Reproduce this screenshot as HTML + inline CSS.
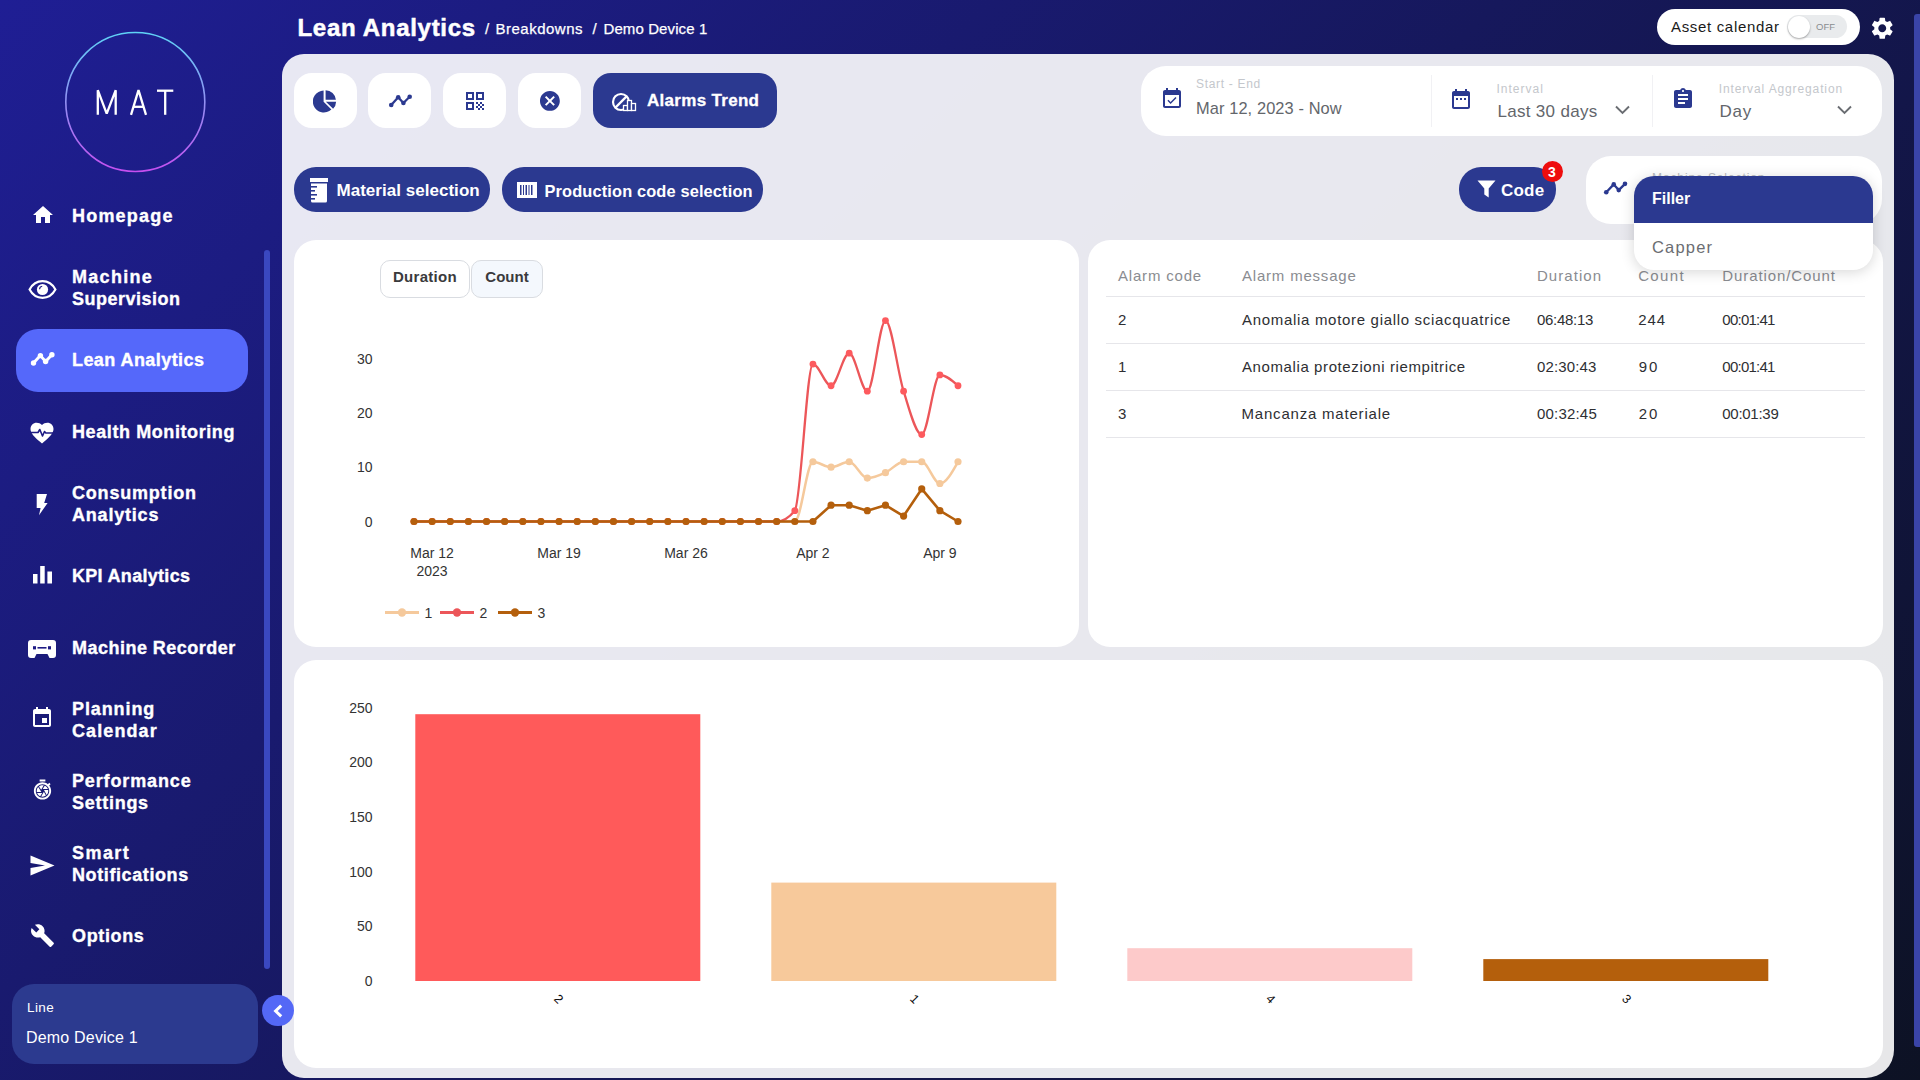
<!DOCTYPE html>
<html><head><meta charset="utf-8">
<style>
*{box-sizing:border-box;margin:0;padding:0}
html,body{width:1920px;height:1080px;overflow:hidden}
body{position:relative;font-family:"Liberation Sans",sans-serif;background:linear-gradient(135deg,#1f1e94 0%,#0d1224 100%);color:#fff}
.abs{position:absolute}
svg{display:block}
.nav{position:absolute;left:72px;font-weight:bold;font-size:18px;line-height:22px;color:#fff;letter-spacing:0.2px;-webkit-text-stroke:0.35px #fff}
.nicon{position:absolute;fill:#fff}
.panel{position:absolute;left:282px;top:54px;width:1612px;height:1024px;background:rgba(255,255,255,0.9);border-radius:22px 26px 28px 22px}
.card{position:absolute;background:#fff;border-radius:22px}
.wbtn{position:absolute;top:73px;width:63px;height:55px;background:#fff;border-radius:18px}
.dbtn{position:absolute;background:#2b3990;color:#fff;font-weight:bold}
</style></head>
<body>
<!-- logo -->
<svg class="abs" style="left:0;top:0" width="280" height="200">
  <defs><linearGradient id="lg" x1="0" y1="0" x2="0" y2="1"><stop offset="0" stop-color="#5fd3f6"/><stop offset="1" stop-color="#c64ff0"/></linearGradient></defs>
  <circle cx="135.3" cy="102" r="69.5" fill="none" stroke="url(#lg)" stroke-width="1.6"/>
  <g stroke="#fff" stroke-width="2.3" fill="none" stroke-linejoin="bevel">
    <polyline points="97.8,114.8 97.8,90.2 106.7,113.6 115.7,90.2 115.7,114.8"/>
    <polyline points="131,114.8 138.5,90.2 146,114.8"/>
    <line x1="133.5" y1="106.8" x2="143.5" y2="106.8"/>
    <line x1="157" y1="90.7" x2="173.3" y2="90.7"/>
    <line x1="165.2" y1="90.7" x2="165.2" y2="114.8"/>
  </g>
</svg>

<!-- sidebar scrollbar -->
<div class="abs" style="left:264px;top:250px;width:6px;height:719px;background:#3a48c0;border-radius:3px"></div>

<!-- active pill -->
<div class="abs" style="left:16px;top:329px;width:232px;height:63px;background:#5568fa;border-radius:22px"></div>


<!-- nav items -->
<div class="nav" style="top:205px;letter-spacing:1.2px">Homepage</div>
<div class="nav" style="top:266px;letter-spacing:1.3px">Machine</div>
<div class="nav" style="top:288px;letter-spacing:0.5px">Supervision</div>
<div class="nav" style="top:349px;letter-spacing:0.43px">Lean Analytics</div>
<div class="nav" style="top:421px;letter-spacing:0.59px">Health Monitoring</div>
<div class="nav" style="top:482px;letter-spacing:0.8px">Consumption</div>
<div class="nav" style="top:504px;letter-spacing:0.8px">Analytics</div>
<div class="nav" style="top:565px;letter-spacing:0.3px">KPI Analytics</div>
<div class="nav" style="top:637px;letter-spacing:0.48px">Machine Recorder</div>
<div class="nav" style="top:698px;letter-spacing:0.9px">Planning</div>
<div class="nav" style="top:720px;letter-spacing:1.1px">Calendar</div>
<div class="nav" style="top:770px;letter-spacing:0.86px">Performance</div>
<div class="nav" style="top:792px;letter-spacing:0.73px">Settings</div>
<div class="nav" style="top:842px;letter-spacing:1.45px">Smart</div>
<div class="nav" style="top:864px;letter-spacing:0.6px">Notifications</div>
<div class="nav" style="top:925px;letter-spacing:0.63px">Options</div>

<!-- nav icons -->
<svg class="nicon" style="left:30.5px;top:203px" width="24" height="24" viewBox="0 0 24 24"><path d="M10 20v-6h4v6h5v-8h3L12 3 2 12h3v8z"/></svg>
<svg class="abs" style="left:28px;top:280px" width="29" height="19" viewBox="0 0 29 19"><path d="M1.6 9.5C5 3.2 9.5 1.2 14.5 1.2S24 3.2 27.4 9.5C24 15.8 19.5 17.8 14.5 17.8S5 15.8 1.6 9.5Z" fill="none" stroke="#fff" stroke-width="2.2"/><circle cx="14.5" cy="9.5" r="5.6" fill="#fff"/><path d="M11.6 9.2a3 3 0 0 1 2.6-3" fill="none" stroke="#1e1b88" stroke-width="1.1"/></svg>
<svg class="abs" style="left:20px;top:340px" width="40" height="30"><g fill="#fff"><circle cx="13.5" cy="23" r="2.7"/><circle cx="20.4" cy="15.6" r="2.7"/><circle cx="25.6" cy="21.5" r="2.7"/><circle cx="31.9" cy="14.8" r="2.7"/></g><polyline points="13.5,23 20.4,15.6 25.6,21.5 31.9,14.8" fill="none" stroke="#fff" stroke-width="2.9" stroke-linejoin="round"/></svg>
<svg class="nicon" style="left:30px;top:422px" width="24" height="22" viewBox="0 0 24 22"><path d="M12 21.5L10.3 20C4.3 14.6 0.5 11.2 0.5 6.9 0.5 3.4 3.2 0.7 6.7 0.7c1.9 0 3.8.9 5.3 2.3C13.5 1.6 15.4.7 17.3.7c3.5 0 6.2 2.7 6.2 6.2 0 4.3-3.8 7.7-9.8 13.1z"/><polyline points="0.5,10.5 8,10.5 9.8,7.5 12.5,14 14.5,9.5 15.8,11 23.5,11" fill="none" stroke="#1e1b84" stroke-width="1.6" stroke-linejoin="round"/></svg>
<svg class="nicon" style="left:34px;top:493px" width="15" height="24" viewBox="0 0 15 24"><path d="M2.7 1H13L10.2 10H13.6L5 22.2 6.6 15H2.7z"/></svg>
<svg class="nicon" style="left:33px;top:566px" width="19" height="18" viewBox="0 0 19 18"><path d="M0 8h4.5v9.5H0zM7.2 0h4.5v17.5H7.2zM14.4 5.5H19v12h-4.6z"/></svg>
<svg class="nicon" style="left:28px;top:640px" width="28" height="18" viewBox="0 0 28 18"><path d="M3 0h22a3 3 0 0 1 3 3v12a3 3 0 0 1-3 3h-3.5l-2-4h-11l-2 4H3a3 3 0 0 1-3-3V3a3 3 0 0 1 3-3z"/><rect x="5" y="6.2" width="3" height="3.2" fill="#1e1b84"/><rect x="20" y="6.2" width="3" height="3.2" fill="#1e1b84"/><rect x="9.5" y="7" width="9" height="1.6" fill="#1e1b84"/></svg>
<svg class="nicon" style="left:30px;top:706px" width="24" height="24" viewBox="0 0 24 24"><path d="M17 12h-5v5h5v-5zM16 1v2H8V1H6v2H5c-1.11 0-1.99.9-1.99 2L3 19c0 1.1.89 2 2 2h14c1.1 0 2-.9 2-2V5c0-1.1-.9-2-2-2h-1V1h-2zm3 18H5V8h14v11z"/></svg>
<svg class="nicon" style="left:31px;top:778px" width="23" height="24" viewBox="0 0 24 24"><path d="M15 1H9v2h6V1zm4.03 6.39l1.42-1.42c-.43-.51-.9-.99-1.41-1.41l-1.42 1.42C16.07 4.74 14.12 4 12 4c-4.97 0-9 4.030-9 9s4.02 9 9 9 9-4.03 9-9c0-2.12-.74-4.07-1.97-5.61zM12 20c-3.87 0-7-3.13-7-7s3.13-7 7-7 7 3.13 7 7-3.13 7-7 7zm-.32-5H6.35c.57 1.62 1.82 2.92 3.41 3.56l-.11-.06 2.030-3.5zm5.97-4c-.57-1.6-1.78-2.89-3.34-3.54L12.26 11h5.39zm-7.04 7.83c.45.11.91.17 1.39.17 1.34 0 2.57-.45 3.570-1.19l-2.11-3.9-2.85 4.92zM7.55 8.99C6.59 10.05 6 11.46 6 13c0 .34.04.67.09 1h4.72L7.55 8.99zm8.79 8.14C17.37 16.06 18 14.6 18 13c0-.34-.04-.67-.09-1h-4.34l2.77 5.13zm-3.01-9.98C12.9 7.06 12.46 7 12 7c-1.4 0-2.69.49-3.71 1.29l2.32 3.56 2.72-4.7z"/></svg>
<svg class="nicon" style="left:30px;top:855px" width="25" height="21" viewBox="0 0 25 21"><path d="M0.5 0.5L24.5 10.5 0.5 20.5 0.5 13 15 10.5 0.5 8z"/></svg>
<svg class="nicon" style="left:30px;top:923px" width="25" height="25" viewBox="0 0 24 24"><path d="M22.7 19l-9.1-9.1c.9-2.3.4-5-1.5-6.9-2-2-5-2.4-7.4-1.3L9 6 6 9 1.6 4.7C.4 7.1.9 10.1 2.9 12.1c1.9 1.9 4.6 2.4 6.9 1.5l9.1 9.1c.4.4 1 .4 1.4 0l2.3-2.3c.5-.4.5-1.1.1-1.4z"/></svg>

<!-- line box -->
<div class="abs" style="left:12px;top:984px;width:246px;height:80px;background:#2c3a8f;border-radius:22px"></div>
<div class="abs" style="left:27px;top:1000px;font-size:13.5px;line-height:16px;letter-spacing:0.37px">Line</div>
<div class="abs" style="left:26px;top:1028px;font-size:16px;line-height:19px;letter-spacing:0.19px">Demo Device 1</div>
<!-- header -->
<div class="abs" style="left:297.5px;top:13px;font-size:24px;line-height:30px;font-weight:bold;letter-spacing:0.7px;-webkit-text-stroke:0.5px #fff">Lean Analytics</div>
<div class="abs" style="left:485px;top:19.5px;font-size:15px;line-height:18px;-webkit-text-stroke:0.25px #fff">/</div><div class="abs" style="left:495.5px;top:19.5px;font-size:15px;line-height:18px;letter-spacing:0.5px;-webkit-text-stroke:0.25px #fff">Breakdowns</div>
<div class="abs" style="left:592.5px;top:19.5px;font-size:15px;line-height:18px;-webkit-text-stroke:0.25px #fff">/</div><div class="abs" style="left:603.5px;top:19.5px;font-size:15px;line-height:18px;letter-spacing:0.1px;-webkit-text-stroke:0.25px #fff">Demo Device 1</div>


<!-- asset calendar -->
<div class="abs" style="left:1657px;top:9px;width:203px;height:36px;background:#fff;border-radius:18px"></div>
<div class="abs" style="left:1671px;top:18px;font-size:15px;line-height:18px;color:#1a1a1a;letter-spacing:0.67px">Asset calendar</div>
<div class="abs" style="left:1787px;top:15px;width:60px;height:23px;background:#e9ebed;border-radius:12px"></div>
<div class="abs" style="left:1816px;top:21px;font-size:9.5px;line-height:11px;color:#8a8d90">OFF</div>
<div class="abs" style="left:1787.5px;top:15.5px;width:22.5px;height:22.5px;background:#fff;border-radius:50%;box-shadow:0 1px 2px rgba(0,0,0,0.35)"></div>
<svg class="abs" style="left:1869.3px;top:15.3px" width="26.5" height="26.5" viewBox="0 0 24 24"><path fill="#fff" d="M19.14 12.94c.04-.3.06-.61.06-.94 0-.32-.02-.64-.07-.94l2.03-1.58c.18-.14.23-.41.12-.61l-1.92-3.32c-.12-.22-.37-.29-.59-.22l-2.39.96c-.5-.38-1.03-.7-1.62-.94l-.36-2.54c-.04-.24-.24-.41-.48-.41h-3.84c-.24 0-.43.17-.47.41l-.36 2.54c-.59.24-1.13.57-1.62.94l-2.39-.96c-.22-.08-.47 0-.59.22L2.740 8.87c-.12.21-.08.47.12.61l2.03 1.58c-.05.3-.09.63-.09.94s.02.64.07.94l-2.03 1.58c-.18.14-.23.41-.12.61l1.92 3.32c.12.22.37.29.59.22l2.39-.96c.5.38 1.03.7 1.62.94l.36 2.54c.05.24.24.41.48.41h3.84c.24 0 .44-.17.47-.41l.36-2.54c.59-.24 1.13-.56 1.62-.94l2.39.96c.22.08.47 0 .59-.22l1.92-3.32c.12-.22.07-.47-.12-.61l-2.01-1.58zM12 15.6c-1.98 0-3.6-1.62-3.6-3.6s1.62-3.6 3.6-3.6 3.6 1.62 3.6 3.6-1.62 3.6-3.6 3.6z"/></svg>

<!-- right scrollbar -->
<div class="abs" style="left:1914px;top:14px;width:6px;height:1033px;background:#3a44a8;border-radius:3px 0 0 3px"></div>

<!-- main panel -->
<div class="panel"></div>


<!-- toolbar white buttons -->
<div class="wbtn" style="left:294px"></div>
<div class="wbtn" style="left:368px"></div>
<div class="wbtn" style="left:443px"></div>
<div class="wbtn" style="left:518px"></div>
<svg class="abs" style="left:313px;top:89px" width="24" height="24" viewBox="0 0 24 24"><path fill="#2b3990" d="M10.6 1.5v11.2l7.8 7.8A11 11 0 1 1 10.6 1.5zM12.6 1.2A10.5 10.5 0 0 1 22.9 10.7H12.6zM12.9 12.7h10.2a10.5 10.5 0 0 1-3 7.1z"/></svg>
<svg class="abs" style="left:380px;top:85px" width="40" height="30"><g fill="#2b3990"><circle cx="11.25" cy="20" r="2.3"/><circle cx="18.2" cy="12.3" r="2.3"/><circle cx="23.4" cy="18" r="2.3"/><circle cx="29.7" cy="11.7" r="2.3"/></g><polyline points="11.25,20 18.2,12.3 23.4,18 29.7,11.7" fill="none" stroke="#2b3990" stroke-width="2.3" stroke-linejoin="round"/></svg>
<svg class="abs" style="left:463px;top:89px" width="24" height="24" viewBox="0 0 24 24"><path fill="#2b3990" d="M3 11h8V3H3v8zm2-6h4v4H5V5zM3 21h8v-8H3v8zm2-6h4v4H5v-4zM13 3v8h8V3h-8zm6 6h-4V5h4v4zM19 19h2v2h-2zM13 13h2v2h-2zM15 15h2v2h-2zM13 17h2v2h-2zM15 19h2v2h-2zM17 17h2v2h-2zM17 13h2v2h-2zM19 15h2v2h-2z"/></svg>
<svg class="abs" style="left:538px;top:89px" width="23.8" height="23.8" viewBox="0 0 24 24"><path fill="#2b3990" d="M12 2C6.47 2 2 6.47 2 12s4.47 10 10 10 10-4.47 10-10S17.53 2 12 2zm5 13.59L15.590 17 12 13.41 8.41 17 7 15.59 10.59 12 7 8.41 8.41 7 12 10.59 15.59 7 17 8.41 13.41 12 17 15.59z"/></svg>
<div class="dbtn" style="left:593px;top:73px;width:184px;height:55px;border-radius:18px"></div>
<svg class="abs" style="left:611px;top:90px" width="28" height="24"><circle cx="10" cy="12" r="8" fill="none" stroke="#fff" stroke-width="2.2"/><line x1="4.4" y1="17.6" x2="15.6" y2="6.4" stroke="#fff" stroke-width="2.2"/><g fill="#2b3990" stroke="#fff" stroke-width="1.3"><rect x="12.5" y="15.5" width="4" height="5"/><rect x="16.5" y="10.5" width="4" height="10"/><rect x="20.5" y="13.5" width="4" height="7"/></g></svg>
<div class="abs" style="left:647px;top:90.8px;font-size:17px;line-height:20px;font-weight:bold;letter-spacing:0.3px;-webkit-text-stroke:0.3px #fff">Alarms Trend</div>

<!-- date panel -->
<div class="abs" style="left:1141px;top:66px;width:741px;height:70px;background:#fff;border-radius:25px"></div>
<div class="abs" style="left:1431px;top:75px;width:1px;height:52px;background:#f1f1f4"></div>
<div class="abs" style="left:1652px;top:75px;width:1px;height:52px;background:#f1f1f4"></div>
<svg class="abs" style="left:1160px;top:87px" width="24" height="24" viewBox="0 0 24 24"><path fill="#2b3990" d="M16.53 11.06L15.47 10l-4.88 4.88-2.12-2.12-1.06 1.06L10.59 17l5.94-5.94zM19 3h-1V1h-2v2H8V1H6v2H5c-1.11 0-1.99.9-1.99 2L3 19c0 1.1.89 2 2 2h14c1.1 0 2-.9 2-2V5c0-1.1-.9-2-2-2zm0 16H5V8h14v11z"/></svg>
<div class="abs" style="left:1196px;top:77px;font-size:12px;line-height:14px;color:#c4c7cc;letter-spacing:0.68px">Start - End</div>
<div class="abs" style="left:1196px;top:99px;font-size:16.4px;line-height:19px;color:#63666b;letter-spacing:0.1px">Mar 12, 2023 - Now</div>
<svg class="abs" style="left:1449px;top:87px" width="24" height="24" viewBox="0 0 24 24"><path fill="#2b3990" d="M9 11H7v2h2v-2zm4 0h-2v2h2v-2zm4 0h-2v2h2v-2zm2-7h-1V2h-2v2H8V2H6v2H5c-1.11 0-1.99.9-1.99 2L3 20c0 1.1.89 2 2 2h14c1.1 0 2-.9 2-2V6c0-1.1-.9-2-2-2zm0 16H5V9h14v11z"/></svg>
<div class="abs" style="left:1496.5px;top:82px;font-size:12px;line-height:14px;color:#c4c7cc;letter-spacing:1px">Interval</div>
<div class="abs" style="left:1497.5px;top:102px;font-size:17px;line-height:20px;color:#63666b;letter-spacing:0.3px">Last 30 days</div>
<svg class="abs" style="left:1614px;top:103px" width="17" height="13" viewBox="0 0 17 13"><polyline points="2,3.5 8.5,10 15,3.5" fill="none" stroke="#6a6d72" stroke-width="1.9"/></svg>
<svg class="abs" style="left:1671px;top:87px" width="24" height="24" viewBox="0 0 24 24"><path fill="#2b3990" d="M19 3h-4.18C14.4 1.84 13.3 1 12 1c-1.3 0-2.4.84-2.82 2H5c-1.1 0-2 .9-2 2v14c0 1.1.9 2 2 2h14c1.1 0 2-.9 2-2V5c0-1.1-.9-2-2-2zm-7 0c.55 0 1 .45 1 1s-.45 1-1 1-1-.45-1-1 .45-1 1-1zm2 14H7v-2h7v2zm3-4H7v-2h10v2zm0-4H7V7h10v2z"/></svg>
<div class="abs" style="left:1718.7px;top:82px;font-size:12px;line-height:14px;color:#c4c7cc;letter-spacing:0.88px">Interval Aggregation</div>
<div class="abs" style="left:1719.5px;top:102px;font-size:17px;line-height:20px;color:#63666b;letter-spacing:0.75px">Day</div>
<svg class="abs" style="left:1836px;top:103px" width="17" height="13" viewBox="0 0 17 13"><polyline points="2,3.5 8.5,10 15,3.5" fill="none" stroke="#6a6d72" stroke-width="1.9"/></svg>

<!-- selection buttons -->
<div class="dbtn" style="left:294px;top:167px;width:196px;height:45px;border-radius:22px"></div>
<svg class="abs" style="left:309px;top:177px" width="20" height="26" viewBox="0 0 20 26"><path fill="#fff" d="M1 1h18v4H1zM2 6.5h16v17.5a1.5 1.5 0 0 1-1.5 1.5h-13A1.5 1.5 0 0 1 2 24z"/><g fill="#2b3990"><rect x="2" y="9" width="6" height="1.6"/><rect x="2" y="13" width="4" height="1.6"/><rect x="2" y="17" width="6" height="1.6"/><rect x="2" y="21" width="4" height="1.6"/></g></svg>
<div class="abs" style="left:336.5px;top:181px;font-size:17px;line-height:20px;font-weight:bold;letter-spacing:0.03px">Material selection</div>
<div class="dbtn" style="left:502px;top:167px;width:261px;height:45px;border-radius:22px"></div>
<svg class="abs" style="left:517px;top:182px" width="20" height="16" viewBox="0 0 20 16"><path fill="#fff" d="M0 0h20v16H0z"/><g fill="#2b3990"><rect x="3" y="3" width="1.5" height="10"/><rect x="6" y="3" width="1" height="10"/><rect x="8.5" y="3" width="1.5" height="10"/><rect x="11.5" y="3" width="1" height="10"/><rect x="14" y="3" width="1.5" height="10"/></g></svg>
<div class="abs" style="left:544.5px;top:180.5px;font-size:16.4px;line-height:20px;font-weight:bold;letter-spacing:0.13px">Production code selection</div>

<!-- code filter -->
<div class="dbtn" style="left:1459px;top:167px;width:97px;height:45px;border-radius:22px"></div>
<svg class="abs" style="left:1477px;top:180px" width="19" height="18" viewBox="0 0 19 18"><path fill="#fff" d="M0.5 0.5h18l-6.8 8v9l-4.4-3v-6z"/></svg>
<div class="abs" style="left:1501px;top:180.5px;font-size:17px;line-height:20px;font-weight:bold;letter-spacing:0.2px">Code</div>
<div class="abs" style="left:1541.5px;top:161px;width:21px;height:21px;border-radius:50%;background:#ee0d0d"></div>
<div class="abs" style="left:1541.5px;top:163.5px;width:21px;text-align:center;font-size:14px;line-height:16px;font-weight:bold">3</div>

<!-- machine selection -->
<div class="abs" style="left:1586px;top:156px;width:296px;height:68px;background:#fff;border-radius:25px"></div>
<div class="abs" style="left:1652px;top:171px;font-size:12px;line-height:14px;color:#b9bbc0;letter-spacing:0.9px">Machine Selection</div>
<svg class="abs" style="left:1596px;top:173px" width="40" height="30"><g fill="#2b3990"><circle cx="10.25" cy="19.2" r="2.3"/><circle cx="17.75" cy="11.4" r="2.3"/><circle cx="22.75" cy="17.1" r="2.3"/><circle cx="29" cy="10.85" r="2.3"/></g><polyline points="10.25,19.2 17.75,11.4 22.75,17.1 29,10.85" fill="none" stroke="#2b3990" stroke-width="2.3" stroke-linejoin="round"/></svg>

<!-- cards -->
<div class="card" style="left:294px;top:240px;width:785px;height:407px"></div>
<div class="card" style="left:1088px;top:240px;width:795px;height:407px"></div>
<div class="card" style="left:294px;top:660px;width:1589px;height:408px"></div>
<!--CHARTS-->
<div class="abs" style="left:380px;top:260px;width:90px;height:38px;border:1px solid #d9dce1;border-radius:10px;background:#fff"></div>
<div class="abs" style="left:471px;top:260px;width:72px;height:38px;border:1px solid #d9dce1;border-radius:10px;background:#f4f8fd"></div>
<div class="abs" style="left:380px;top:268.2px;width:90px;text-align:center;font-size:15px;line-height:18px;font-weight:bold;color:#3a3a3c;letter-spacing:0.29px">Duration</div>
<div class="abs" style="left:471px;top:268.2px;width:72px;text-align:center;font-size:15px;line-height:18px;font-weight:bold;color:#3a3a3c">Count</div>
<svg class="abs" style="left:0;top:0" width="1100" height="660">
<text x="372.5" y="526.5" text-anchor="end" font-size="14" fill="#333">0</text>
<text x="372.5" y="472.2" text-anchor="end" font-size="14" fill="#333">10</text>
<text x="372.5" y="417.9" text-anchor="end" font-size="14" fill="#333">20</text>
<text x="372.5" y="363.6" text-anchor="end" font-size="14" fill="#333">30</text>
<text x="432.1" y="558" text-anchor="middle" font-size="14" fill="#333">Mar 12</text>
<text x="559.1" y="558" text-anchor="middle" font-size="14" fill="#333">Mar 19</text>
<text x="686.0" y="558" text-anchor="middle" font-size="14" fill="#333">Mar 26</text>
<text x="812.9" y="558" text-anchor="middle" font-size="14" fill="#333">Apr 2</text>
<text x="939.9" y="558" text-anchor="middle" font-size="14" fill="#333">Apr 9</text>
<text x="432.1" y="576" text-anchor="middle" font-size="14" fill="#333">2023</text>
<path d="M414.00,521.50C420.04,521.50 426.09,521.50 432.13,521.50C438.18,521.50 444.22,521.50 450.27,521.50C456.31,521.50 462.36,521.50 468.40,521.50C474.44,521.50 480.49,521.50 486.53,521.50C492.58,521.50 498.62,521.50 504.67,521.50C510.71,521.50 516.76,521.50 522.80,521.50C528.84,521.50 534.89,521.50 540.93,521.50C546.98,521.50 553.02,521.50 559.07,521.50C565.11,521.50 571.16,521.50 577.20,521.50C583.24,521.50 589.29,521.50 595.33,521.50C601.38,521.50 607.42,521.50 613.47,521.50C619.51,521.50 625.56,521.50 631.60,521.50C637.64,521.50 643.69,521.50 649.73,521.50C655.78,521.50 661.82,521.50 667.87,521.50C673.91,521.50 679.96,521.50 686.00,521.50C692.04,521.50 698.09,521.50 704.13,521.50C710.18,521.50 716.22,521.50 722.27,521.50C728.31,521.50 734.36,521.50 740.40,521.50C746.44,521.50 752.49,521.50 758.53,521.50C764.58,521.50 770.62,521.50 776.67,521.50C782.71,521.50 788.76,521.50 794.80,521.50C800.84,521.50 806.89,461.77 812.93,461.77C818.98,461.77 825.02,467.20 831.07,467.20C837.11,467.20 843.16,461.77 849.20,461.77C855.24,461.77 861.29,478.06 867.33,478.06C873.38,478.06 879.42,475.35 885.47,472.63C891.51,469.92 897.56,461.77 903.60,461.77C909.64,461.77 915.69,461.77 921.73,461.77C927.78,461.77 933.82,483.49 939.87,483.49C945.91,483.49 951.96,472.63 958.00,461.77" fill="none" stroke="#f5c99c" stroke-width="2.5" stroke-linejoin="round"/>
<circle cx="414.00" cy="521.50" r="3.6" fill="#f5c99c"/>
<circle cx="432.13" cy="521.50" r="3.6" fill="#f5c99c"/>
<circle cx="450.27" cy="521.50" r="3.6" fill="#f5c99c"/>
<circle cx="468.40" cy="521.50" r="3.6" fill="#f5c99c"/>
<circle cx="486.53" cy="521.50" r="3.6" fill="#f5c99c"/>
<circle cx="504.67" cy="521.50" r="3.6" fill="#f5c99c"/>
<circle cx="522.80" cy="521.50" r="3.6" fill="#f5c99c"/>
<circle cx="540.93" cy="521.50" r="3.6" fill="#f5c99c"/>
<circle cx="559.07" cy="521.50" r="3.6" fill="#f5c99c"/>
<circle cx="577.20" cy="521.50" r="3.6" fill="#f5c99c"/>
<circle cx="595.33" cy="521.50" r="3.6" fill="#f5c99c"/>
<circle cx="613.47" cy="521.50" r="3.6" fill="#f5c99c"/>
<circle cx="631.60" cy="521.50" r="3.6" fill="#f5c99c"/>
<circle cx="649.73" cy="521.50" r="3.6" fill="#f5c99c"/>
<circle cx="667.87" cy="521.50" r="3.6" fill="#f5c99c"/>
<circle cx="686.00" cy="521.50" r="3.6" fill="#f5c99c"/>
<circle cx="704.13" cy="521.50" r="3.6" fill="#f5c99c"/>
<circle cx="722.27" cy="521.50" r="3.6" fill="#f5c99c"/>
<circle cx="740.40" cy="521.50" r="3.6" fill="#f5c99c"/>
<circle cx="758.53" cy="521.50" r="3.6" fill="#f5c99c"/>
<circle cx="776.67" cy="521.50" r="3.6" fill="#f5c99c"/>
<circle cx="794.80" cy="521.50" r="3.6" fill="#f5c99c"/>
<circle cx="812.93" cy="461.77" r="3.6" fill="#f5c99c"/>
<circle cx="831.07" cy="467.20" r="3.6" fill="#f5c99c"/>
<circle cx="849.20" cy="461.77" r="3.6" fill="#f5c99c"/>
<circle cx="867.33" cy="478.06" r="3.6" fill="#f5c99c"/>
<circle cx="885.47" cy="472.63" r="3.6" fill="#f5c99c"/>
<circle cx="903.60" cy="461.77" r="3.6" fill="#f5c99c"/>
<circle cx="921.73" cy="461.77" r="3.6" fill="#f5c99c"/>
<circle cx="939.87" cy="483.49" r="3.6" fill="#f5c99c"/>
<circle cx="958.00" cy="461.77" r="3.6" fill="#f5c99c"/>
<path d="M414.00,521.50C420.04,521.50 426.09,521.50 432.13,521.50C438.18,521.50 444.22,521.50 450.27,521.50C456.31,521.50 462.36,521.50 468.40,521.50C474.44,521.50 480.49,521.50 486.53,521.50C492.58,521.50 498.62,521.50 504.67,521.50C510.71,521.50 516.76,521.50 522.80,521.50C528.84,521.50 534.89,521.50 540.93,521.50C546.98,521.50 553.02,521.50 559.07,521.50C565.11,521.50 571.16,521.50 577.20,521.50C583.24,521.50 589.29,521.50 595.33,521.50C601.38,521.50 607.42,521.50 613.47,521.50C619.51,521.50 625.56,521.50 631.60,521.50C637.64,521.50 643.69,521.50 649.73,521.50C655.78,521.50 661.82,521.50 667.87,521.50C673.91,521.50 679.96,521.50 686.00,521.50C692.04,521.50 698.09,521.50 704.13,521.50C710.18,521.50 716.22,521.50 722.27,521.50C728.31,521.50 734.36,521.50 740.40,521.50C746.44,521.50 752.49,521.50 758.53,521.50C764.58,521.50 770.62,521.50 776.67,521.50C782.71,521.50 788.76,517.88 794.80,510.64C800.84,503.40 806.89,364.03 812.93,364.03C818.98,364.03 825.02,385.75 831.07,385.75C837.11,385.75 843.16,353.17 849.20,353.17C855.24,353.17 861.29,391.18 867.33,391.18C873.38,391.18 879.42,320.59 885.47,320.59C891.51,320.59 897.56,372.18 903.60,391.18C909.64,410.19 915.69,434.62 921.73,434.62C927.78,434.62 933.82,374.89 939.87,374.89C945.91,374.89 951.96,380.32 958.00,385.75" fill="none" stroke="#ec5659" stroke-width="2.3" stroke-linejoin="round"/>
<circle cx="414.00" cy="521.50" r="3.4" fill="#fd5a5e"/>
<circle cx="432.13" cy="521.50" r="3.4" fill="#fd5a5e"/>
<circle cx="450.27" cy="521.50" r="3.4" fill="#fd5a5e"/>
<circle cx="468.40" cy="521.50" r="3.4" fill="#fd5a5e"/>
<circle cx="486.53" cy="521.50" r="3.4" fill="#fd5a5e"/>
<circle cx="504.67" cy="521.50" r="3.4" fill="#fd5a5e"/>
<circle cx="522.80" cy="521.50" r="3.4" fill="#fd5a5e"/>
<circle cx="540.93" cy="521.50" r="3.4" fill="#fd5a5e"/>
<circle cx="559.07" cy="521.50" r="3.4" fill="#fd5a5e"/>
<circle cx="577.20" cy="521.50" r="3.4" fill="#fd5a5e"/>
<circle cx="595.33" cy="521.50" r="3.4" fill="#fd5a5e"/>
<circle cx="613.47" cy="521.50" r="3.4" fill="#fd5a5e"/>
<circle cx="631.60" cy="521.50" r="3.4" fill="#fd5a5e"/>
<circle cx="649.73" cy="521.50" r="3.4" fill="#fd5a5e"/>
<circle cx="667.87" cy="521.50" r="3.4" fill="#fd5a5e"/>
<circle cx="686.00" cy="521.50" r="3.4" fill="#fd5a5e"/>
<circle cx="704.13" cy="521.50" r="3.4" fill="#fd5a5e"/>
<circle cx="722.27" cy="521.50" r="3.4" fill="#fd5a5e"/>
<circle cx="740.40" cy="521.50" r="3.4" fill="#fd5a5e"/>
<circle cx="758.53" cy="521.50" r="3.4" fill="#fd5a5e"/>
<circle cx="776.67" cy="521.50" r="3.4" fill="#fd5a5e"/>
<circle cx="794.80" cy="510.64" r="3.4" fill="#fd5a5e"/>
<circle cx="812.93" cy="364.03" r="3.4" fill="#fd5a5e"/>
<circle cx="831.07" cy="385.75" r="3.4" fill="#fd5a5e"/>
<circle cx="849.20" cy="353.17" r="3.4" fill="#fd5a5e"/>
<circle cx="867.33" cy="391.18" r="3.4" fill="#fd5a5e"/>
<circle cx="885.47" cy="320.59" r="3.4" fill="#fd5a5e"/>
<circle cx="903.60" cy="391.18" r="3.4" fill="#fd5a5e"/>
<circle cx="921.73" cy="434.62" r="3.4" fill="#fd5a5e"/>
<circle cx="939.87" cy="374.89" r="3.4" fill="#fd5a5e"/>
<circle cx="958.00" cy="385.75" r="3.4" fill="#fd5a5e"/>
<path d="M414.00,521.50 L432.13,521.50 L450.27,521.50 L468.40,521.50 L486.53,521.50 L504.67,521.50 L522.80,521.50 L540.93,521.50 L559.07,521.50 L577.20,521.50 L595.33,521.50 L613.47,521.50 L631.60,521.50 L649.73,521.50 L667.87,521.50 L686.00,521.50 L704.13,521.50 L722.27,521.50 L740.40,521.50 L758.53,521.50 L776.67,521.50 L794.80,521.50 L812.93,521.50 L831.07,505.21 L849.20,505.21 L867.33,510.64 L885.47,505.21 L903.60,516.07 L921.73,488.92 L939.87,510.64 L958.00,521.50" fill="none" stroke="#b45f0c" stroke-width="2.6" stroke-linejoin="round"/>
<circle cx="414.00" cy="521.50" r="3.6" fill="#b45f0c"/>
<circle cx="432.13" cy="521.50" r="3.6" fill="#b45f0c"/>
<circle cx="450.27" cy="521.50" r="3.6" fill="#b45f0c"/>
<circle cx="468.40" cy="521.50" r="3.6" fill="#b45f0c"/>
<circle cx="486.53" cy="521.50" r="3.6" fill="#b45f0c"/>
<circle cx="504.67" cy="521.50" r="3.6" fill="#b45f0c"/>
<circle cx="522.80" cy="521.50" r="3.6" fill="#b45f0c"/>
<circle cx="540.93" cy="521.50" r="3.6" fill="#b45f0c"/>
<circle cx="559.07" cy="521.50" r="3.6" fill="#b45f0c"/>
<circle cx="577.20" cy="521.50" r="3.6" fill="#b45f0c"/>
<circle cx="595.33" cy="521.50" r="3.6" fill="#b45f0c"/>
<circle cx="613.47" cy="521.50" r="3.6" fill="#b45f0c"/>
<circle cx="631.60" cy="521.50" r="3.6" fill="#b45f0c"/>
<circle cx="649.73" cy="521.50" r="3.6" fill="#b45f0c"/>
<circle cx="667.87" cy="521.50" r="3.6" fill="#b45f0c"/>
<circle cx="686.00" cy="521.50" r="3.6" fill="#b45f0c"/>
<circle cx="704.13" cy="521.50" r="3.6" fill="#b45f0c"/>
<circle cx="722.27" cy="521.50" r="3.6" fill="#b45f0c"/>
<circle cx="740.40" cy="521.50" r="3.6" fill="#b45f0c"/>
<circle cx="758.53" cy="521.50" r="3.6" fill="#b45f0c"/>
<circle cx="776.67" cy="521.50" r="3.6" fill="#b45f0c"/>
<circle cx="794.80" cy="521.50" r="3.6" fill="#b45f0c"/>
<circle cx="812.93" cy="521.50" r="3.6" fill="#b45f0c"/>
<circle cx="831.07" cy="505.21" r="3.6" fill="#b45f0c"/>
<circle cx="849.20" cy="505.21" r="3.6" fill="#b45f0c"/>
<circle cx="867.33" cy="510.64" r="3.6" fill="#b45f0c"/>
<circle cx="885.47" cy="505.21" r="3.6" fill="#b45f0c"/>
<circle cx="903.60" cy="516.07" r="3.6" fill="#b45f0c"/>
<circle cx="921.73" cy="488.92" r="3.6" fill="#b45f0c"/>
<circle cx="939.87" cy="510.64" r="3.6" fill="#b45f0c"/>
<circle cx="958.00" cy="521.50" r="3.6" fill="#b45f0c"/>
<line x1="385" y1="612.5" x2="419" y2="612.5" stroke="#f5c99c" stroke-width="3"/>
<circle cx="402" cy="612.5" r="4.2" fill="#f5c99c"/>
<text x="424.5" y="617.5" font-size="14" fill="#333">1</text>
<line x1="440" y1="612.5" x2="474" y2="612.5" stroke="#ec5659" stroke-width="3"/>
<circle cx="457" cy="612.5" r="4.2" fill="#ec5659"/>
<text x="479.5" y="617.5" font-size="14" fill="#333">2</text>
<line x1="498" y1="612.5" x2="532" y2="612.5" stroke="#b45f0c" stroke-width="3"/>
<circle cx="515" cy="612.5" r="4.2" fill="#b45f0c"/>
<text x="537.5" y="617.5" font-size="14" fill="#333">3</text>
</svg><svg class="abs" style="left:0;top:0" width="1900" height="1080">
<text x="372.5" y="986.0" text-anchor="end" font-size="14" fill="#333">0</text>
<text x="372.5" y="931.3" text-anchor="end" font-size="14" fill="#333">50</text>
<text x="372.5" y="876.6" text-anchor="end" font-size="14" fill="#333">100</text>
<text x="372.5" y="822.0" text-anchor="end" font-size="14" fill="#333">150</text>
<text x="372.5" y="767.3" text-anchor="end" font-size="14" fill="#333">200</text>
<text x="372.5" y="712.6" text-anchor="end" font-size="14" fill="#333">250</text>
<rect x="415.3" y="714.2" width="285" height="266.8" fill="#ff5a5a"/>
<text x="0" y="4.3" font-size="12.5" fill="#111" text-anchor="middle" transform="translate(558.8,999) rotate(45)">2</text>
<rect x="771.3" y="882.6" width="285" height="98.4" fill="#f7c99b"/>
<text x="0" y="4.3" font-size="12.5" fill="#111" text-anchor="middle" transform="translate(914.8,999) rotate(45)">1</text>
<rect x="1127.3" y="948.2" width="285" height="32.8" fill="#fdcaca"/>
<text x="0" y="4.3" font-size="12.5" fill="#111" text-anchor="middle" transform="translate(1270.8,999) rotate(45)">4</text>
<rect x="1483.3" y="959.1" width="285" height="21.9" fill="#b45f0c"/>
<text x="0" y="4.3" font-size="12.5" fill="#111" text-anchor="middle" transform="translate(1626.8,999) rotate(45)">3</text>
</svg><div class="abs" style="left:1118px;top:267px;font-size:15px;line-height:18px;color:#8a8c91;letter-spacing:0.81px">Alarm code</div>
<div class="abs" style="left:1242px;top:267px;font-size:15px;line-height:18px;color:#8a8c91;letter-spacing:0.8px">Alarm message</div>
<div class="abs" style="left:1537px;top:267px;font-size:15px;line-height:18px;color:#8a8c91;letter-spacing:1.04px">Duration</div>
<div class="abs" style="left:1638.2px;top:267px;font-size:15px;line-height:18px;color:#8a8c91;letter-spacing:1.35px">Count</div>
<div class="abs" style="left:1722.3px;top:267px;font-size:15px;line-height:18px;color:#8a8c91;letter-spacing:0.9px">Duration/Count</div>
<div class="abs" style="left:1106px;top:296px;width:759px;height:1px;background:#e6e6ea"></div>
<div class="abs" style="left:1106px;top:343px;width:759px;height:1px;background:#e6e6ea"></div>
<div class="abs" style="left:1106px;top:390px;width:759px;height:1px;background:#e6e6ea"></div>
<div class="abs" style="left:1106px;top:437px;width:759px;height:1px;background:#e6e6ea"></div>
<div class="abs" style="left:1118px;top:311px;font-size:15px;line-height:18px;color:#2e2f33;letter-spacing:0.55px">2</div>
<div class="abs" style="left:1242px;top:311px;font-size:15px;line-height:18px;color:#2e2f33;letter-spacing:0.69px">Anomalia motore giallo sciacquatrice</div>
<div class="abs" style="left:1537px;top:311px;font-size:15px;line-height:18px;color:#2e2f33;letter-spacing:-0.3px">06:48:13</div>
<div class="abs" style="left:1638.2px;top:311px;font-size:15px;line-height:18px;color:#2e2f33;letter-spacing:1.0px">244</div>
<div class="abs" style="left:1722.3px;top:311px;font-size:15px;line-height:18px;color:#2e2f33;letter-spacing:-0.75px">00:01:41</div>
<div class="abs" style="left:1118px;top:358px;font-size:15px;line-height:18px;color:#2e2f33;letter-spacing:0.55px">1</div>
<div class="abs" style="left:1242px;top:358px;font-size:15px;line-height:18px;color:#2e2f33;letter-spacing:0.6px">Anomalia protezioni riempitrice</div>
<div class="abs" style="left:1537px;top:358px;font-size:15px;line-height:18px;color:#2e2f33;letter-spacing:0.14px">02:30:43</div>
<div class="abs" style="left:1638.7px;top:358px;font-size:15px;line-height:18px;color:#2e2f33;letter-spacing:2.0px">90</div>
<div class="abs" style="left:1722.3px;top:358px;font-size:15px;line-height:18px;color:#2e2f33;letter-spacing:-0.75px">00:01:41</div>
<div class="abs" style="left:1118px;top:405px;font-size:15px;line-height:18px;color:#2e2f33;letter-spacing:0.55px">3</div>
<div class="abs" style="left:1241.5px;top:405px;font-size:15px;line-height:18px;color:#2e2f33;letter-spacing:0.8px">Mancanza materiale</div>
<div class="abs" style="left:1537px;top:405px;font-size:15px;line-height:18px;color:#2e2f33;letter-spacing:0.19px">00:32:45</div>
<div class="abs" style="left:1638.7px;top:405px;font-size:15px;line-height:18px;color:#2e2f33;letter-spacing:2.0px">20</div>
<div class="abs" style="left:1722.3px;top:405px;font-size:15px;line-height:18px;color:#2e2f33;letter-spacing:-0.28px">00:01:39</div>
<!--/CHARTS-->
<!-- dropdown -->
<div class="abs" style="left:1634px;top:175.5px;width:239px;height:94.5px;background:#fff;border-radius:20px;box-shadow:0 2px 14px rgba(0,0,0,0.16);overflow:hidden">
  <div style="height:47px;background:#2b3990"></div>
</div>
<div class="abs" style="left:1652px;top:189.3px;font-size:16px;line-height:20px;font-weight:bold;color:#fff">Filler</div>
<div class="abs" style="left:1652px;top:237px;font-size:16.5px;line-height:20px;color:#6b6d72;letter-spacing:1.2px">Capper</div>

<!-- collapse -->
<div class="abs" style="left:262px;top:994.5px;width:32px;height:31.5px;border-radius:50%;background:#5468f6"></div>
<svg class="abs" style="left:262px;top:995px" width="32" height="32"><polyline points="19.2,10.6 13.6,16 19.2,21.4" fill="none" stroke="#fff" stroke-width="3" stroke-linejoin="miter"/></svg>

</body></html>
